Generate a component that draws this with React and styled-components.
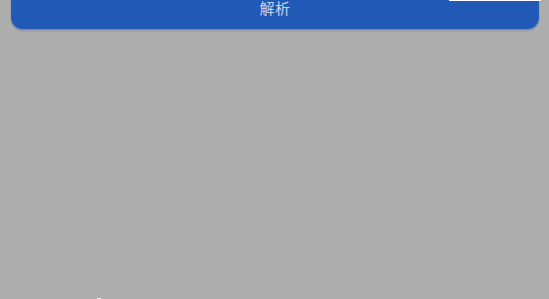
import React from "react";
import styled, { createGlobalStyle } from "styled-components";

const GlobalStyle = createGlobalStyle`
  html, body {
    margin: 0;
    padding: 0;
    background: #adadad;
  }
  body {
    font-family: "Noto Sans CJK SC", "Noto Sans", sans-serif;
    overflow: hidden;
  }
`;

const Page = styled.div`
  position: relative;
  display: flex;
  flex-direction: column;
  width: 549px;
  height: 299px;
  background: #adadad;
  box-sizing: border-box;
  padding: 0 10px 0 11px;
  overflow: hidden;
`;

const ParseButton = styled.button`
  display: flex;
  align-items: center;
  justify-content: center;
  flex: none;
  width: 100%;
  height: 44px;
  margin-top: -14px;
  border: none;
  border-bottom: 1px solid #6f8fc8;
  border-radius: 12px;
  background: #2159b7;
  color: #c9d5ea;
  font-family: "Noto Sans CJK SC", sans-serif;
  font-size: 15px;
  letter-spacing: 0.5px;
  padding: 0;
  box-shadow: 0 1px 2px rgba(0, 0, 0, 0.15);
`;

const TopStrip = styled.div`
  position: absolute;
  top: 0;
  left: 449px;
  width: 92px;
  height: 1px;
  background: #ffffff;
`;

const CornerDot = styled.div`
  position: absolute;
  bottom: 0;
  left: 97px;
  width: 4px;
  height: 1px;
  background: #f2f2f2;
`;

function App() {
  return (
    <>
      <GlobalStyle />
      <Page>
        <ParseButton>解析</ParseButton>
        <TopStrip />
        <CornerDot />
      </Page>
    </>
  );
}

export default App;
